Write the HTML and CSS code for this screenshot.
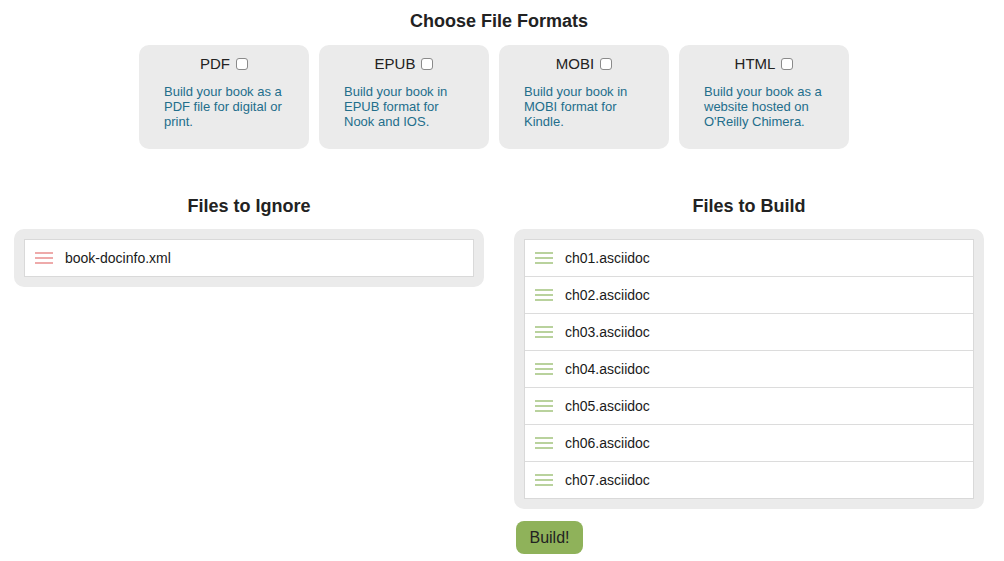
FILE: index.html
```html
<!DOCTYPE html>
<html>
<head>
<meta charset="utf-8">
<link rel="stylesheet" href="styles.css">
</head>
<body>
<div class="page">
  <section class="formats">
    <h2 class="heading heading-top">Choose File Formats</h2>
    <div class="cards">
      <div class="card">
        <label class="card-label">PDF <input type="checkbox"></label>
        <p class="card-desc">Build your book as a PDF file for digital or print.</p>
      </div>
      <div class="card">
        <label class="card-label">EPUB <input type="checkbox"></label>
        <p class="card-desc">Build your book in EPUB format for Nook and IOS.</p>
      </div>
      <div class="card">
        <label class="card-label">MOBI <input type="checkbox"></label>
        <p class="card-desc">Build your book in MOBI format for Kindle.</p>
      </div>
      <div class="card">
        <label class="card-label">HTML <input type="checkbox"></label>
        <p class="card-desc">Build your book as a website hosted on O'Reilly Chimera.</p>
      </div>
    </div>
  </section>

  <section class="columns">
    <div class="column">
      <h2 class="heading">Files to Ignore</h2>
      <div class="panel">
        <ul class="file-list ignore">
          <li class="file"><span class="handle"><i></i><i></i><i></i></span>book-docinfo.xml</li>
        </ul>
      </div>
    </div>
    <div class="column">
      <h2 class="heading">Files to Build</h2>
      <div class="panel">
        <ul class="file-list build">
          <li class="file"><span class="handle"><i></i><i></i><i></i></span>ch01.asciidoc</li>
          <li class="file"><span class="handle"><i></i><i></i><i></i></span>ch02.asciidoc</li>
          <li class="file"><span class="handle"><i></i><i></i><i></i></span>ch03.asciidoc</li>
          <li class="file"><span class="handle"><i></i><i></i><i></i></span>ch04.asciidoc</li>
          <li class="file"><span class="handle"><i></i><i></i><i></i></span>ch05.asciidoc</li>
          <li class="file"><span class="handle"><i></i><i></i><i></i></span>ch06.asciidoc</li>
          <li class="file"><span class="handle"><i></i><i></i><i></i></span>ch07.asciidoc</li>
        </ul>
      </div>
      <button class="build-btn">Build!</button>
    </div>
  </section>
</div>
</body>
</html>
```

FILE: styles.css
```css
* { box-sizing: border-box; }

html, body {
  margin: 0;
  padding: 0;
  background: #fff;
}

body {
  font-family: "Liberation Sans", Arial, sans-serif;
  color: #222;
}

.page {
  width: 970px;
  margin-left: 14px;
}

.heading {
  margin: 0;
  font-size: 18px;
  font-weight: bold;
  text-align: center;
  line-height: 20px;
  color: #222;
}

.heading-top {
  padding-top: 11px;
}

.cards {
  display: flex;
  justify-content: center;
  margin-top: 14px;
}

.card {
  width: 170px;
  height: 104px;
  margin-right: 10px;
  background: #ebebeb;
  border-radius: 10px;
  padding-top: 10px;
}

.card-label {
  display: flex;
  justify-content: center;
  align-items: center;
  font-size: 15px;
  line-height: 18px;
  color: #222;
}

.card-label input {
  width: 12px;
  height: 12px;
  margin: 0 0 0 6px;
  appearance: none;
  -webkit-appearance: none;
  border: 1px solid #8a8a8a;
  border-radius: 3px;
  background: #fff;
}

.card-desc {
  margin: 11px 0 0;
  padding-left: 25px;
  width: 150px;
  font-size: 13px;
  line-height: 15px;
  color: #236e8b;
}

.columns {
  display: flex;
  gap: 30px;
  margin-top: 47px;
}

.column {
  flex: 1;
}

.panel {
  margin-top: 13px;
  background: #ebebeb;
  border-radius: 10px;
  padding: 10px;
}

.file-list {
  list-style: none;
  margin: 0;
  padding: 0;
  background: #fff;
  border: 1px solid #d9d9d9;
}

.file {
  display: flex;
  align-items: center;
  height: 37px;
  padding-left: 10px;
  border-top: 1px solid #dcdcdc;
  font-size: 14px;
  color: #1a1a1a;
}

.file:first-child {
  height: 36px;
  border-top: none;
}

.handle {
  display: flex;
  flex-direction: column;
  gap: 3px;
  width: 18px;
  margin-right: 12px;
}

.handle i {
  display: block;
  height: 2px;
}

.ignore .handle i { background: #eeaaaa; }
.build .handle i { background: #b9d29d; }

.build-btn {
  margin: 12px 0 0 2px;
  width: 67px;
  height: 33px;
  border: none;
  border-radius: 8px;
  background: #8fb25a;
  font-family: "Liberation Sans", Arial, sans-serif;
  font-size: 16px;
  color: #222;
  padding: 0;
}
```
